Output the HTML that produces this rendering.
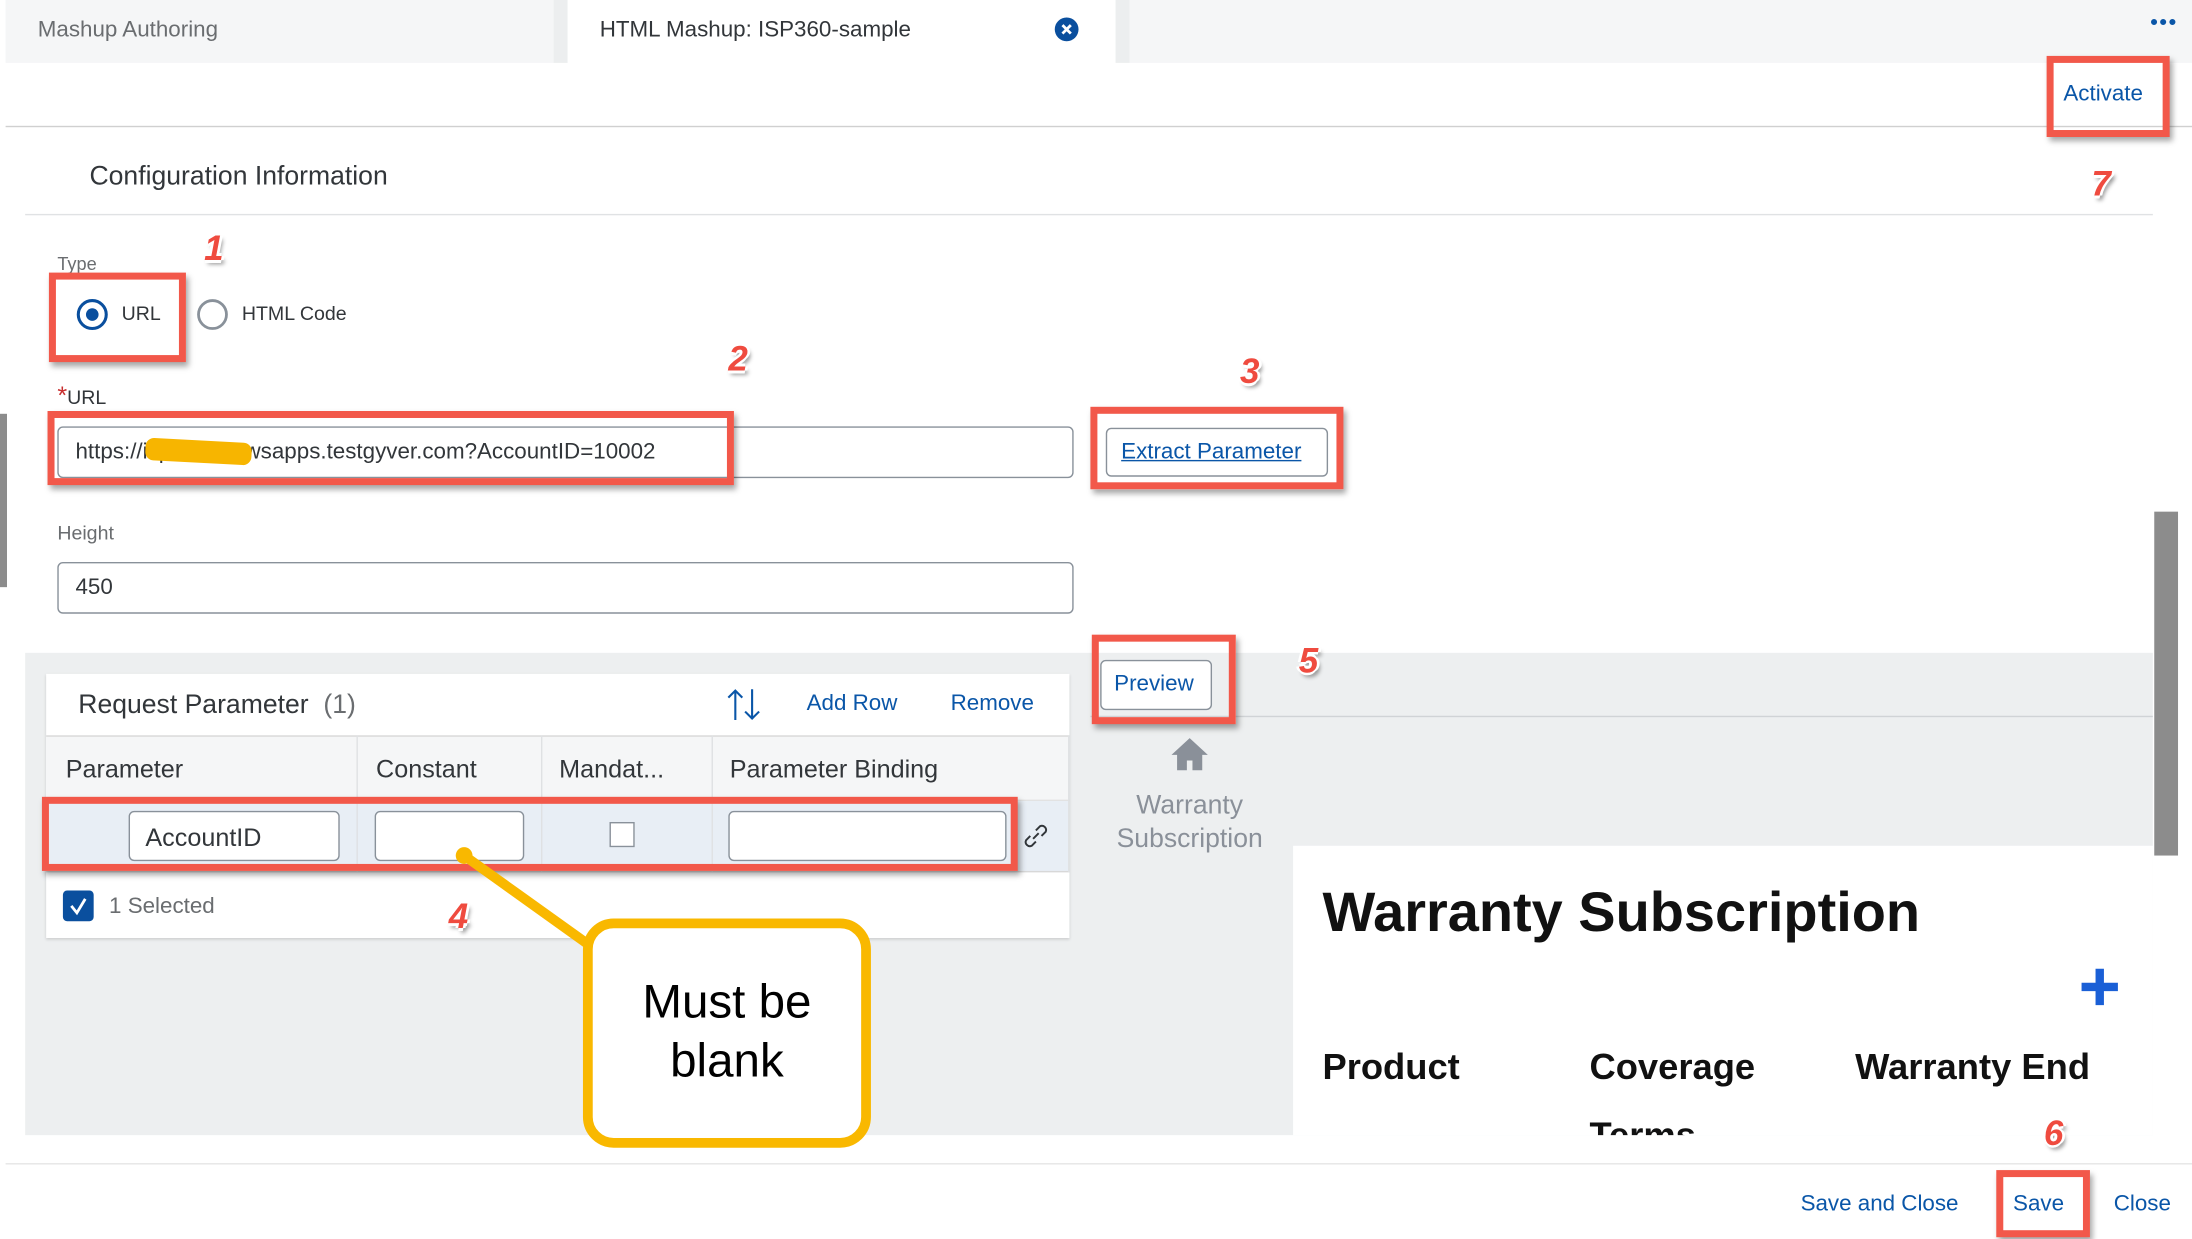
<!DOCTYPE html>
<html><head><meta charset="utf-8"><style>
html,body{margin:0;padding:0;width:2192px;height:1238px;overflow:hidden;background:#fff;font-family:"Liberation Sans",Arial,sans-serif}
#s{position:absolute;left:0;top:0;width:1568px;height:886px;transform:scale(1.39796);transform-origin:0 0;background:#fff}
.a{position:absolute}
.t{position:absolute;white-space:nowrap}
.rb{position:absolute;border:5px solid #f2584a;box-sizing:border-box;box-shadow:2px 3px 4px rgba(0,0,0,.35)}
.n{position:absolute;font-weight:bold;font-style:italic;font-size:25px;color:#ef4b3f;text-shadow:-2px 0 #fff,2px 0 #fff,0 -2px #fff,0 2px #fff,2px 3px 3px rgba(0,0,0,.45)}
.inp{position:absolute;border:1px solid #89919a;border-radius:4px;background:#fff;box-sizing:border-box}
.blue{color:#0a56a8}
.wh{position:absolute;white-space:nowrap;font-weight:bold;color:#111;font-family:"Liberation Sans",Arial,sans-serif}
</style></head><body><div id="s">
<div class="a" style="left:4px;top:0;width:392px;height:45px;background:#f5f6f7"></div>
<div class="a" style="left:396px;top:0;width:10px;height:45px;background:#eceeef"></div>
<div class="a" style="left:798px;top:0;width:10px;height:45px;background:#eceeef"></div>
<div class="a" style="left:808px;top:0;width:760px;height:45px;background:#f5f6f7"></div>
<div class="t" style="left:27px;top:13px;font-size:16px;color:#6a6d70">Mashup Authoring</div>
<div class="t" style="left:429px;top:13px;font-size:16px;color:#32363a">HTML Mashup: ISP360-sample</div>
<svg class="a" style="left:754px;top:12px" width="18" height="18"><circle cx="9" cy="9" r="8.5" fill="#0a4f9e"/><path d="M6 6l6 6M12 6l-6 6" stroke="#fff" stroke-width="2"/></svg>
<div class="t blue" style="left:1538px;top:8px;font-size:16px;letter-spacing:1px">•••</div>
<div class="a" style="left:4px;top:90px;width:1564px;height:1px;background:#d0d0d0"></div>
<div class="t blue" style="left:1476px;top:59px;font-size:16px">Activate</div>
<div class="rb" style="left:1464px;top:40px;width:88px;height:58px"></div>
<div class="n" style="left:1496px;top:118px">7</div>
<div class="t" style="left:64px;top:116px;font-size:19px;color:#32363a">Configuration Information</div>
<div class="a" style="left:18px;top:153px;width:1522px;height:1px;background:#e0e2e4"></div>
<div class="t" style="left:41px;top:181px;font-size:13px;color:#6a6d70">Type</div>
<svg class="a" style="left:54px;top:213px" width="24" height="24"><circle cx="12" cy="12" r="10" fill="#fff" stroke="#0a4f9e" stroke-width="2.2"/><circle cx="12" cy="12" r="4.5" fill="#0a4f9e"/></svg>
<div class="t" style="left:87px;top:216px;font-size:14px;color:#32363a">URL</div>
<svg class="a" style="left:140px;top:213px" width="24" height="24"><circle cx="12" cy="12" r="10" fill="#fff" stroke="#89919a" stroke-width="2"/></svg>
<div class="t" style="left:173px;top:216px;font-size:14px;color:#32363a">HTML Code</div>
<div class="rb" style="left:35px;top:195px;width:98px;height:64px"></div>
<div class="n" style="left:146px;top:164px">1</div>
<div class="t" style="left:41px;top:273px;font-size:14px;color:#32363a"><span style="color:#c82f2f;font-size:18px">*</span>URL</div>
<div class="inp" style="left:41px;top:305px;width:727px;height:37px"></div>
<div class="t" style="left:54px;top:315px;font-size:16px;color:#32363a">https://ispxxxxxx.wsapps.testgyver.com?AccountID=10002</div>
<div class="a" style="left:104px;top:315px;width:76px;height:16px;background:#f7b500;border-radius:6px;transform:rotate(3deg)"></div>
<div class="rb" style="left:34px;top:294px;width:491px;height:53px"></div>
<div class="n" style="left:521px;top:243px">2</div>
<div class="a" style="left:791px;top:306px;width:159px;height:35px;border:1px solid #89919a;border-radius:4px;box-sizing:border-box;background:#fff"></div>
<div class="t" style="left:802px;top:315px;font-size:16px;color:#0a56a8;text-decoration:underline">Extract Parameter</div>
<div class="rb" style="left:780px;top:291px;width:181px;height:59px"></div>
<div class="n" style="left:887px;top:252px">3</div>
<div class="t" style="left:41px;top:373px;font-size:14px;color:#6a6d70">Height</div>
<div class="inp" style="left:41px;top:402px;width:727px;height:37px"></div>
<div class="t" style="left:54px;top:412px;font-size:16px;color:#32363a">450</div>
<div class="a" style="left:18px;top:467px;width:1522px;height:345px;background:#edeff0"></div>
<div class="a" style="left:780px;top:512px;width:760px;height:1px;background:#d0d3d6"></div>
<div class="a" style="left:925px;top:605px;width:615px;height:207px;background:#fff;overflow:hidden">
 <div class="wh" style="left:21px;top:26px;font-size:40px">Warranty Subscription</div>
 <div class="wh" style="left:21px;top:143px;font-size:26px">Product</div>
 <div class="wh" style="left:212px;top:143px;font-size:26px">Coverage</div>
 <div class="wh" style="left:212px;top:192px;font-size:26px">Terms</div>
 <div class="wh" style="left:402px;top:143px;font-size:26px">Warranty End</div>
 <svg class="a" style="left:563px;top:87px" width="28" height="28"><path d="M14 1v26M1 14h26" stroke="#1a5fd6" stroke-width="6"/></svg>
</div>
<svg class="a" style="left:836px;top:526px" width="30" height="26"><path d="M15 2L2 14h4v11h7v-7h4v7h7V14h4z" fill="#8a9099"/></svg>
<div class="t" style="left:789px;top:565px;font-size:19px;color:#8a9099;text-align:center;line-height:24px;width:124px;white-space:normal">Warranty Subscription</div>
<div class="a" style="left:787px;top:472px;width:80px;height:36px;background:#fff;border:1px solid #89919a;border-radius:4px;box-sizing:border-box"></div>
<div class="t blue" style="left:797px;top:481px;font-size:16px">Preview</div>
<div class="rb" style="left:781px;top:454px;width:103px;height:64px"></div>
<div class="n" style="left:929px;top:459px">5</div>
<div class="a" style="left:33px;top:482px;width:732px;height:189px;background:#fff;box-shadow:0 1px 2px rgba(0,0,0,.15)"></div>
<div class="t" style="left:56px;top:494px;font-size:19px;color:#32363a">Request Parameter&nbsp;&nbsp;<span style="color:#6a6d70">(1)</span></div>
<svg class="a" style="left:519px;top:491px" width="26" height="26"><path d="M7 24V3M2 8l5-5 5 5M19 2v21M14 18l5 5 5-5" stroke="#0a56a8" stroke-width="1.5" fill="none"/></svg>
<div class="t blue" style="left:577px;top:495px;font-size:16px">Add Row</div>
<div class="t blue" style="left:680px;top:495px;font-size:16px">Remove</div>
<div class="a" style="left:33px;top:526px;width:732px;height:47px;background:#f5f6f7;border-top:1px solid #d8d8d8;border-bottom:1px solid #e2e2e2;box-sizing:border-box"></div>
<div class="a" style="left:33px;top:573px;width:732px;height:51px;background:#e8eef5;border-bottom:1px solid #d8d8d8;box-sizing:border-box"></div>
<div class="a" style="left:255px;top:526px;width:1px;height:98px;background:#dfe1e3"></div>
<div class="a" style="left:387px;top:526px;width:1px;height:98px;background:#dfe1e3"></div>
<div class="a" style="left:509px;top:526px;width:1px;height:98px;background:#dfe1e3"></div>
<div class="a" style="left:764px;top:526px;width:1px;height:98px;background:#dfe1e3"></div>
<div class="t" style="left:47px;top:540px;font-size:18px;color:#32363a">Parameter</div>
<div class="t" style="left:269px;top:540px;font-size:18px;color:#32363a">Constant</div>
<div class="t" style="left:400px;top:540px;font-size:18px;color:#32363a">Mandat...</div>
<div class="t" style="left:522px;top:540px;font-size:18px;color:#32363a">Parameter Binding</div>
<div class="inp" style="left:92px;top:580px;width:151px;height:36px"></div>
<div class="t" style="left:104px;top:589px;font-size:18px;color:#32363a">AccountID</div>
<div class="inp" style="left:268px;top:580px;width:107px;height:36px"></div>
<div class="a" style="left:436px;top:588px;width:18px;height:18px;border:1px solid #89919a;background:#fff;box-sizing:border-box"></div>
<div class="inp" style="left:521px;top:580px;width:199px;height:36px"></div>
<svg class="a" style="left:730px;top:587px" width="22" height="22"><path d="M9 13l4-4M7 11l-3 3a3 3 0 004 4l3-3M15 11l3-3a3 3 0 00-4-4l-3 3" stroke="#32363a" stroke-width="1.4" fill="none"/></svg>
<div class="rb" style="left:30px;top:570px;width:698px;height:53px"></div>
<div class="a" style="left:45px;top:637px;width:22px;height:22px;background:#0a4f9e;border-radius:3px"></div>
<svg class="a" style="left:45px;top:637px" width="22" height="22"><path d="M6 11l4 5 6-10" stroke="#fff" stroke-width="2" fill="none"/></svg>
<div class="t" style="left:78px;top:640px;font-size:16px;color:#6a6d70">1 Selected</div>
<div class="n" style="left:321px;top:642px">4</div>
<svg class="a" style="left:320px;top:600px" width="110" height="80"><path d="M12 12L100 75" stroke="#f9b800" stroke-width="7"/><circle cx="12" cy="12" r="6" fill="#f9b800"/></svg>
<div class="a" style="left:417px;top:657px;width:206px;height:164px;border:7px solid #f9b800;border-radius:22px;box-sizing:border-box;background:#fff"></div>
<div class="t" style="left:417px;top:696px;width:206px;text-align:center;font-size:34px;color:#000;line-height:42px;white-space:normal">Must be blank</div>
<div class="a" style="left:1541px;top:366px;width:17px;height:246px;background:#8c8c8c"></div>
<div class="a" style="left:0;top:296px;width:5px;height:124px;background:#8c8c8c"></div>
<div class="a" style="left:4px;top:832px;width:1564px;height:1px;background:#e5e5e5"></div>
<div class="t blue" style="left:1288px;top:853px;font-size:16px">Save and Close</div>
<div class="t blue" style="left:1440px;top:853px;font-size:16px">Save</div>
<div class="rb" style="left:1428px;top:837px;width:67px;height:48px"></div>
<div class="t blue" style="left:1512px;top:853px;font-size:16px">Close</div>
<div class="n" style="left:1462px;top:797px">6</div>
</div></body></html>
